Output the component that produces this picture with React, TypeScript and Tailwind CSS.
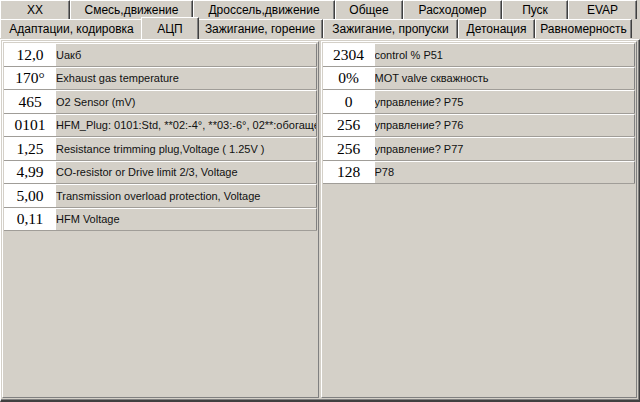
import React from "react";

const topTabs = [
  { title: "XX", w: 70 },
  { title: "Смесь,движение", w: 123 },
  { title: "Дроссель,движение", w: 142 },
  { title: "Общее", w: 68 },
  { title: "Расходомер", w: 99 },
  { title: "Пуск", w: 66 },
  { title: "EVAP", w: 69 },
];

const bottomTabs = [
  { title: "Адаптации, кодировка", w: 143 },
  { title: "АЦП", w: 54, active: true },
  { title: "Зажигание, горение", w: 126 },
  { title: "Зажигание, пропуски", w: 135 },
  { title: "Детонация", w: 77 },
  { title: "Равномерность", w: 97 },
];

const leftRows = [
  { value: "12,0", label: "Uакб" },
  { value: "170°", label: "Exhaust gas temperature" },
  { value: "465", label: "O2 Sensor (mV)" },
  {
    value: "0101",
    label: "HFM_Plug: 0101:Std, **02:-4°, **03:-6°, 02**:обогащение",
  },
  { value: "1,25", label: "Resistance trimming plug,Voltage ( 1.25V )" },
  { value: "4,99", label: "CO-resistor or Drive limit 2/3, Voltage" },
  { value: "5,00", label: "Transmission overload protection, Voltage" },
  { value: "0,11", label: "HFM Voltage" },
];

const rightRows = [
  { value: "2304", label: "control % P51" },
  { value: "0%", label: "MOT valve скважность" },
  { value: "0", label: "управление? P75" },
  { value: "256", label: "управление? P76" },
  { value: "256", label: "управление? P77" },
  { value: "128", label: "P78" },
];

type Row = { value: string; label: string };

const Tab = ({ title, w, active }: { title: string; w: number; active?: boolean }) => {
  if (active) {
    return (
      <div
        className="relative z-10 -mt-[2px] -mx-[2px] h-[22px] bg-[#d4d0c8] border-t border-l border-white border-r border-r-[#404040] shadow-[inset_-1px_0_0_#808080] flex items-center justify-center text-[12px] text-black"
        style={{ width: w + 4 }}
      >
        {title}
      </div>
    );
  }
  return (
    <div
      className="h-[19px] bg-[#d4d0c8] border-t border-l border-white border-r border-r-[#404040] shadow-[inset_-1px_0_0_#808080] flex items-center justify-center text-[12px] text-black whitespace-nowrap"
      style={{ width: w }}
    >
      {title}
    </div>
  );
};

const Panel = ({ rows }: { rows: Row[] }) => (
  <div className="flex-1 min-w-0 border-t border-l border-white border-r border-b border-r-[#808080] border-b-[#808080] pt-[1px] pl-[1px] pr-[1px]">
    {rows.map((r, i) => (
      <div
        key={i}
        className="flex h-[23.5px] border-b border-[#a09d98]"
      >
        <div className="w-[52px] shrink-0 bg-white flex items-center justify-center font-['Liberation_Serif',serif] text-[15.5px] text-black">
          {r.value}
        </div>
        <div className="flex-1 min-w-0 border-t border-white border-r border-r-[#808080] flex items-center text-[11px] text-[#111] whitespace-nowrap overflow-hidden">
          {r.label}
        </div>
      </div>
    ))}
  </div>
);

export default function App() {
  return (
    <div className="w-[640px] h-[402px] bg-[#d4d0c8] overflow-hidden flex flex-col font-['Liberation_Sans',Arial,sans-serif]">
      <div className="flex">
        {topTabs.map((t, i) => (
          <Tab key={i} title={t.title} w={t.w} />
        ))}
      </div>
      <div className="flex">
        {bottomTabs.map((t, i) => (
          <Tab key={i} title={t.title} w={t.w} active={t.active} />
        ))}
      </div>
      <div className="flex-1 flex gap-[2px] border-t border-l border-white border-r border-r-[#404040] border-b-2 border-b-[#404040] shadow-[inset_-1px_-1px_0_#808080] pt-[1px] pl-[1px] pr-[2px] pb-[2px]">
        <Panel rows={leftRows} />
        <Panel rows={rightRows} />
      </div>
    </div>
  );
}
